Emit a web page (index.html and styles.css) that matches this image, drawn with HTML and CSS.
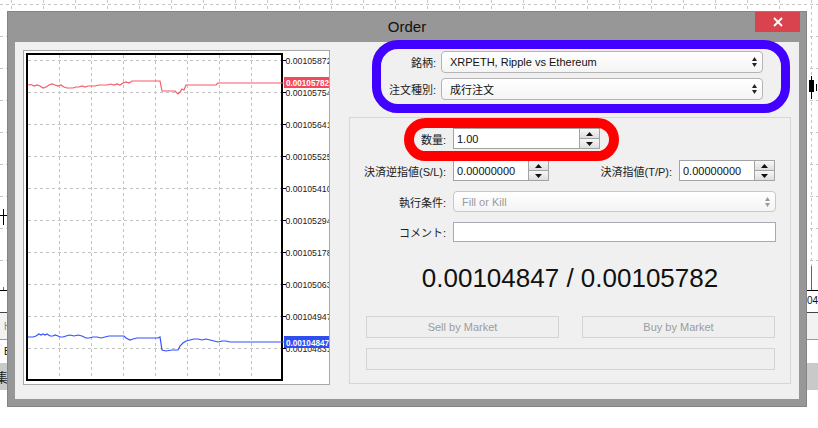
FILE: index.html
```html
<!DOCTYPE html>
<html lang="ja">
<head>
<meta charset="utf-8">
<title>Order</title>
<link rel="stylesheet" href="styles.css">
</head>
<body>
<div class="desk">
  <svg class="backdrop" width="818" height="428" viewBox="0 0 818 428">
    <g class="grid" stroke="#c6c6c6" stroke-dasharray="3 3" stroke-width="1">
      <path d="M0 4.5H818M0 36.5H818M0 68.5H818M0 100.5H818M0 132.5H818M0 164.5H818M0 196.5H818M0 228.5H818M0 260.5H818"/>
      <path d="M11.5 0V290M43.5 0V290M75.5 0V290M107.5 0V290M139.5 0V290M171.5 0V290M203.5 0V290M235.5 0V290M267.5 0V290M299.5 0V290M331.5 0V290M363.5 0V290M395.5 0V290M427.5 0V290M459.5 0V290M491.5 0V290M523.5 0V290M555.5 0V290M587.5 0V290M619.5 0V290M651.5 0V290M683.5 0V290M715.5 0V290M747.5 0V290M779.5 0V290M811.5 0V266"/>
    </g>
    <path d="M3.5 209V225M0 215.5H7" stroke="#000" stroke-width="1"/>
    <rect x="809" y="80" width="5" height="12" fill="#000"/>
    <path d="M811.5 76V99M816.5 84V91" stroke="#000" stroke-width="1"/>
    <path d="M811.5 266V290M3.5 287V290" stroke="#2f8f2f" stroke-width="1"/>
    <path d="M0 290.5H818" stroke="#000"/>
    <text x="807" y="304" class="bd-text">04:</text>
    <path d="M0 312.5H818" stroke="#444"/>
    <rect x="0" y="313" width="818" height="26" fill="#f2f2f2"/>
    <text x="4" y="330" class="bd-text gray">H</text>
    <path d="M0 339.5H818" stroke="#9a9a9a"/>
    <text x="4" y="355" class="bd-text">B</text>
    <rect x="0" y="363" width="818" height="27" fill="#c9c9c9"/>
    <text x="-5" y="382" class="bd-text cjk">集</text>
  </svg>

  <section class="window">
    <header class="titlebar">
      <span></span>
      <span class="title">Order</span>
      <button class="close" type="button" aria-label="close">
        <svg width="10" height="10" viewBox="0 0 10 10"><path d="M1 1L9 9M9 1L1 9" stroke="#fff" stroke-width="1.8"/></svg>
      </button>
    </header>

    <div class="client">
      <div class="chart-panel">
        <svg width="305" height="333" viewBox="24 51 305 333">
          <rect x="24" y="51" width="305" height="333" fill="#fff"/>
          <g stroke="#c2c2c2" stroke-dasharray="3 3" stroke-width="1">
            <path d="M28 60.5H282M28 92.5H282M28 124.5H282M28 156.5H282M28 188.5H282M28 220.5H282M28 252.5H282M28 284.5H282M28 316.5H282M28 348.5H282"/>
            <path d="M59.5 55V380M91.5 55V380M123.5 55V380M155.5 55V380M187.5 55V380M219.5 55V380M251.5 55V380"/>
          </g>
          <rect x="27" y="54" width="255" height="326" fill="none" stroke="#000" stroke-width="2"/>
          <path d="M282 60.5H286M282 92.5H286M282 124.5H286M282 156.5H286M282 188.5H286M282 220.5H286M282 252.5H286M282 284.5H286M282 316.5H286M282 348.5H286" stroke="#000"/>
          <g class="axis">
            <text x="285.5" y="64" textLength="46" lengthAdjust="spacingAndGlyphs">0.00105872</text>
            <text x="285.5" y="96" textLength="46" lengthAdjust="spacingAndGlyphs">0.00105754</text>
            <text x="285.5" y="128" textLength="46" lengthAdjust="spacingAndGlyphs">0.00105641</text>
            <text x="285.5" y="160" textLength="46" lengthAdjust="spacingAndGlyphs">0.00105525</text>
            <text x="285.5" y="192" textLength="46" lengthAdjust="spacingAndGlyphs">0.00105410</text>
            <text x="285.5" y="224" textLength="46" lengthAdjust="spacingAndGlyphs">0.00105294</text>
            <text x="285.5" y="256" textLength="46" lengthAdjust="spacingAndGlyphs">0.00105178</text>
            <text x="285.5" y="288" textLength="46" lengthAdjust="spacingAndGlyphs">0.00105063</text>
            <text x="285.5" y="320" textLength="46" lengthAdjust="spacingAndGlyphs">0.00104947</text>
            <text x="285.5" y="352" textLength="46" lengthAdjust="spacingAndGlyphs">0.00104831</text>
          </g>
          <polyline fill="none" stroke="#f65a66" stroke-width="1.2" points="28,85 31,84.5 34,86 37,85 40,86 43,88 46,87 49,85 52,84 55,85 58,86 61,85 64,87 67,88 70,88 73,88 76,87 79,87 82,86 85,87 88,86 91,86 95,86 99,85 103,85 107,85 111,84 114,85 117,84 120,85 123,83 126,82 129,83 132,81 136,81 160,81 162,91 170,91 175,91 178,94 180,92 182,89 184,90 186,85 196,85 206,85 216,85 218,83 284,83"/>
          <polyline fill="none" stroke="#3452ff" stroke-width="1.2" points="28,337 33,337 36,336 39,334 41,335 43,334 45,335 47,334 50,336 53,336 55,335 58,336 60,337 63,337 66,336 70,335 74,336 78,335 82,336 86,338 89,338 93,337 97,337 101,338 105,337 109,336 113,336 117,336 121,336 124,336 126,338 130,340 133,339 137,338 142,338 147,338 152,338 158,338 160,337 162,350 166,351 172,350 176,350 178,350 180,346 183,343 186,341 190,340 194,339 198,339 202,340 206,339 210,340 214,341 218,342 222,341 226,341 230,342 284,342"/>
          <rect x="284" y="77" width="46" height="11" fill="#f34a5b"/>
          <text x="286" y="86" class="badge" textLength="43" lengthAdjust="spacingAndGlyphs">0.00105782</text>
          <rect x="284" y="336" width="46" height="12" fill="#2f4ef2"/>
          <text x="286" y="345.5" class="badge" textLength="43" lengthAdjust="spacingAndGlyphs">0.00104847</text>
        </svg>
      </div>

      <div class="form">
        <div class="top-fields">
          <div class="row">
            <label class="lbl lbl-top">銘柄:</label>
            <div class="select">
              <span>XRPETH, Ripple vs Ethereum</span>
              <svg class="updown" width="5" height="10" viewBox="0 0 5 10"><polygon points="2.5,0 5,4 0,4"/><polygon points="0,6 5,6 2.5,10"/></svg>
            </div>
          </div>
          <div class="row">
            <label class="lbl lbl-top">注文種別:</label>
            <div class="select">
              <span>成行注文</span>
              <svg class="updown" width="5" height="10" viewBox="0 0 5 10"><polygon points="2.5,0 5,4 0,4"/><polygon points="0,6 5,6 2.5,10"/></svg>
            </div>
          </div>
        </div>

        <div class="group">
          <div class="row row-qty">
            <label class="lbl lbl-grp">数量:</label>
            <div class="spin-input w-qty">
              <span class="val">1.00</span>
              <div class="spinner">
                <span class="sp-btn"><svg width="7" height="4" viewBox="0 0 7 4"><polygon points="3.5,0 7,4 0,4"/></svg></span>
                <span class="sp-btn"><svg width="7" height="4" viewBox="0 0 7 4"><polygon points="0,0 7,0 3.5,4"/></svg></span>
              </div>
            </div>
          </div>

          <div class="row row-sltp">
            <label class="lbl lbl-grp">決済逆指値(S/L):</label>
            <div class="spin-input w-price">
              <span class="val">0.00000000</span>
              <div class="spinner">
                <span class="sp-btn"><svg width="7" height="4" viewBox="0 0 7 4"><polygon points="3.5,0 7,4 0,4"/></svg></span>
                <span class="sp-btn"><svg width="7" height="4" viewBox="0 0 7 4"><polygon points="0,0 7,0 3.5,4"/></svg></span>
              </div>
            </div>
            <label class="lbl lbl-tp">決済指値(T/P):</label>
            <div class="spin-input w-price">
              <span class="val">0.00000000</span>
              <div class="spinner">
                <span class="sp-btn"><svg width="7" height="4" viewBox="0 0 7 4"><polygon points="3.5,0 7,4 0,4"/></svg></span>
                <span class="sp-btn"><svg width="7" height="4" viewBox="0 0 7 4"><polygon points="0,0 7,0 3.5,4"/></svg></span>
              </div>
            </div>
          </div>

          <div class="row row-fill">
            <label class="lbl lbl-grp">執行条件:</label>
            <div class="select disabled w-wide">
              <span>Fill or Kill</span>
              <svg class="updown" width="5" height="10" viewBox="0 0 5 10"><polygon points="2.5,0 5,4 0,4"/><polygon points="0,6 5,6 2.5,10"/></svg>
            </div>
          </div>

          <div class="row row-comment">
            <label class="lbl lbl-grp">コメント:</label>
            <div class="text-input w-wide"></div>
          </div>

          <div class="price">0.00104847 / 0.00105782</div>

          <div class="buttons">
            <button class="btn" type="button">Sell by Market</button>
            <button class="btn" type="button">Buy by Market</button>
          </div>
          <div class="bar"></div>
        </div>
      </div>
    </div>
  </section>

  <div class="mark mark-blue"></div>
  <div class="mark mark-red"></div>
</div>
</body>
</html>
```

FILE: styles.css
```css
html, body {
  margin: 0;
  padding: 0;
  background: #fff;
}

body {
  font-family: "Liberation Sans", "Noto Sans CJK JP", sans-serif;
  font-size: 11px;
  color: #222;
}

.desk {
  position: relative;
  width: 818px;
  height: 428px;
  overflow: hidden;
}

.backdrop {
  position: absolute;
  left: 0;
  top: 0;
}

.bd-text {
  font-family: "Liberation Sans", sans-serif;
  font-size: 10px;
  fill: #111;
}
.bd-text.gray { fill: #888; }
.bd-text.cjk {
  font-family: "Noto Sans CJK JP", sans-serif;
  font-size: 13px;
  fill: #222;
}

/* window */
.window {
  position: absolute;
  left: 7px;
  top: 11px;
  width: 800px;
  height: 396px;
  box-sizing: border-box;
  background: #979797;
  border: 1px solid #848484;
  padding: 0 7px 7px 7px;
  display: flex;
  flex-direction: column;
}

.titlebar {
  height: 30px;
  margin: 0 -7px;
  padding: 0 6px;
  display: grid;
  grid-template-columns: 1fr auto 1fr;
  align-items: center;
}

.title {
  font-size: 15px;
  color: #111;
  line-height: 18px;
}

.close {
  justify-self: end;
  align-self: start;
  width: 45px;
  height: 20px;
  border: 0;
  padding: 0;
  margin: 0;
  background: #d9434e;
  display: flex;
  align-items: center;
  justify-content: center;
}

.client {
  flex: 1;
  background: #f0f0f0;
  padding: 8px;
  display: flex;
  gap: 19px;
}

.chart-panel {
  width: 307px;
  height: 335px;
  box-sizing: border-box;
  border: 1px solid #a8a8a8;
  background: #fff;
  display: flex;
}

.axis text {
  font-family: "Liberation Sans", sans-serif;
  font-size: 9px;
  fill: #1a1a1a;
}

.badge {
  font-family: "Liberation Sans", sans-serif;
  font-size: 9px;
  font-weight: bold;
  fill: #fff;
}

/* form */
.form {
  width: 442px;
  display: flex;
  flex-direction: column;
}

.top-fields {
  padding-top: 1px;
  display: flex;
  flex-direction: column;
  gap: 5px;
}

.row {
  display: flex;
  align-items: center;
}

.lbl {
  text-align: right;
  white-space: nowrap;
  color: #222;
  font-size: 11px;
}

.lbl-top {
  width: 87px;
  margin-right: 5px;
}

.lbl-grp {
  width: 96px;
  margin-right: 7px;
}

.lbl-tp {
  flex: 1;
  margin-right: 7px;
}

.select {
  width: 322px;
  height: 22px;
  box-sizing: border-box;
  border: 1px solid #b4b4b4;
  border-radius: 4px;
  background: linear-gradient(#ffffff, #f4f4f4);
  padding: 0 5px 0 8px;
  display: flex;
  align-items: center;
  justify-content: space-between;
  color: #111;
  font-size: 11px;
}

.updown { fill: #222; }

.select.disabled {
  color: #9a9a9a;
  border-color: #c8c8c8;
  height: 21px;
}
.select.disabled .updown { fill: #999; }

.w-wide { width: 323px; }

.group {
  margin-top: 17px;
  border: 1px solid #d6d6d6;
  padding: 10px 0 13px 0;
  display: flex;
  flex-direction: column;
}

.row-qty, .row-sltp, .row-fill { height: 21px; }
.row-sltp { margin-top: 11px; padding-right: 15px; }
.row-fill { margin-top: 10px; }
.row-comment { margin-top: 10px; height: 20px; }

.spin-input {
  height: 21px;
  box-sizing: border-box;
  border: 1px solid #a3a3a3;
  background: #fff;
  display: flex;
  align-items: center;
}

.w-qty { width: 147px; }
.w-price { width: 96px; }

.spin-input .val {
  flex: 1;
  padding-left: 3px;
  color: #111;
  font-size: 11px;
}

.spinner {
  width: 20px;
  height: 19px;
  box-sizing: border-box;
  border-left: 1px solid #a3a3a3;
  display: flex;
  flex-direction: column;
}

.sp-btn {
  flex: 1;
  display: flex;
  align-items: center;
  justify-content: center;
  background: linear-gradient(#f7f7f7, #dedede);
}
.sp-btn + .sp-btn { border-top: 1px solid #a3a3a3; }
.sp-btn svg { fill: #111; }

.text-input {
  height: 20px;
  box-sizing: border-box;
  border: 1px solid #a8a8b6;
  background: #fff;
}

.price {
  margin-top: 21px;
  height: 30px;
  line-height: 30px;
  text-align: center;
  font-size: 26px;
  color: #111;
}

.buttons {
  margin: 23px 0 0 16px;
  display: flex;
  gap: 23px;
}

.btn {
  width: 193px;
  height: 22px;
  box-sizing: border-box;
  border: 1px solid #d4d4d4;
  background: #efefef;
  color: #9c9c9c;
  font-family: "Liberation Sans", sans-serif;
  font-size: 11px;
  padding: 0;
  margin: 0;
}

.bar {
  margin: 10px 0 0 16px;
  width: 409px;
  height: 22px;
  box-sizing: border-box;
  border: 1px solid #d4d4d4;
  background: #efefef;
}

/* highlight annotations drawn over the dialog */
.mark {
  position: absolute;
  box-sizing: border-box;
}

.mark-blue {
  left: 372px;
  top: 40px;
  width: 418px;
  height: 73px;
  border: 9px solid #4100ff;
  border-radius: 26px;
}

.mark-red {
  left: 404px;
  top: 118px;
  width: 215px;
  height: 43px;
  border: 10px solid #ff0000;
  border-radius: 22px;
}
```
